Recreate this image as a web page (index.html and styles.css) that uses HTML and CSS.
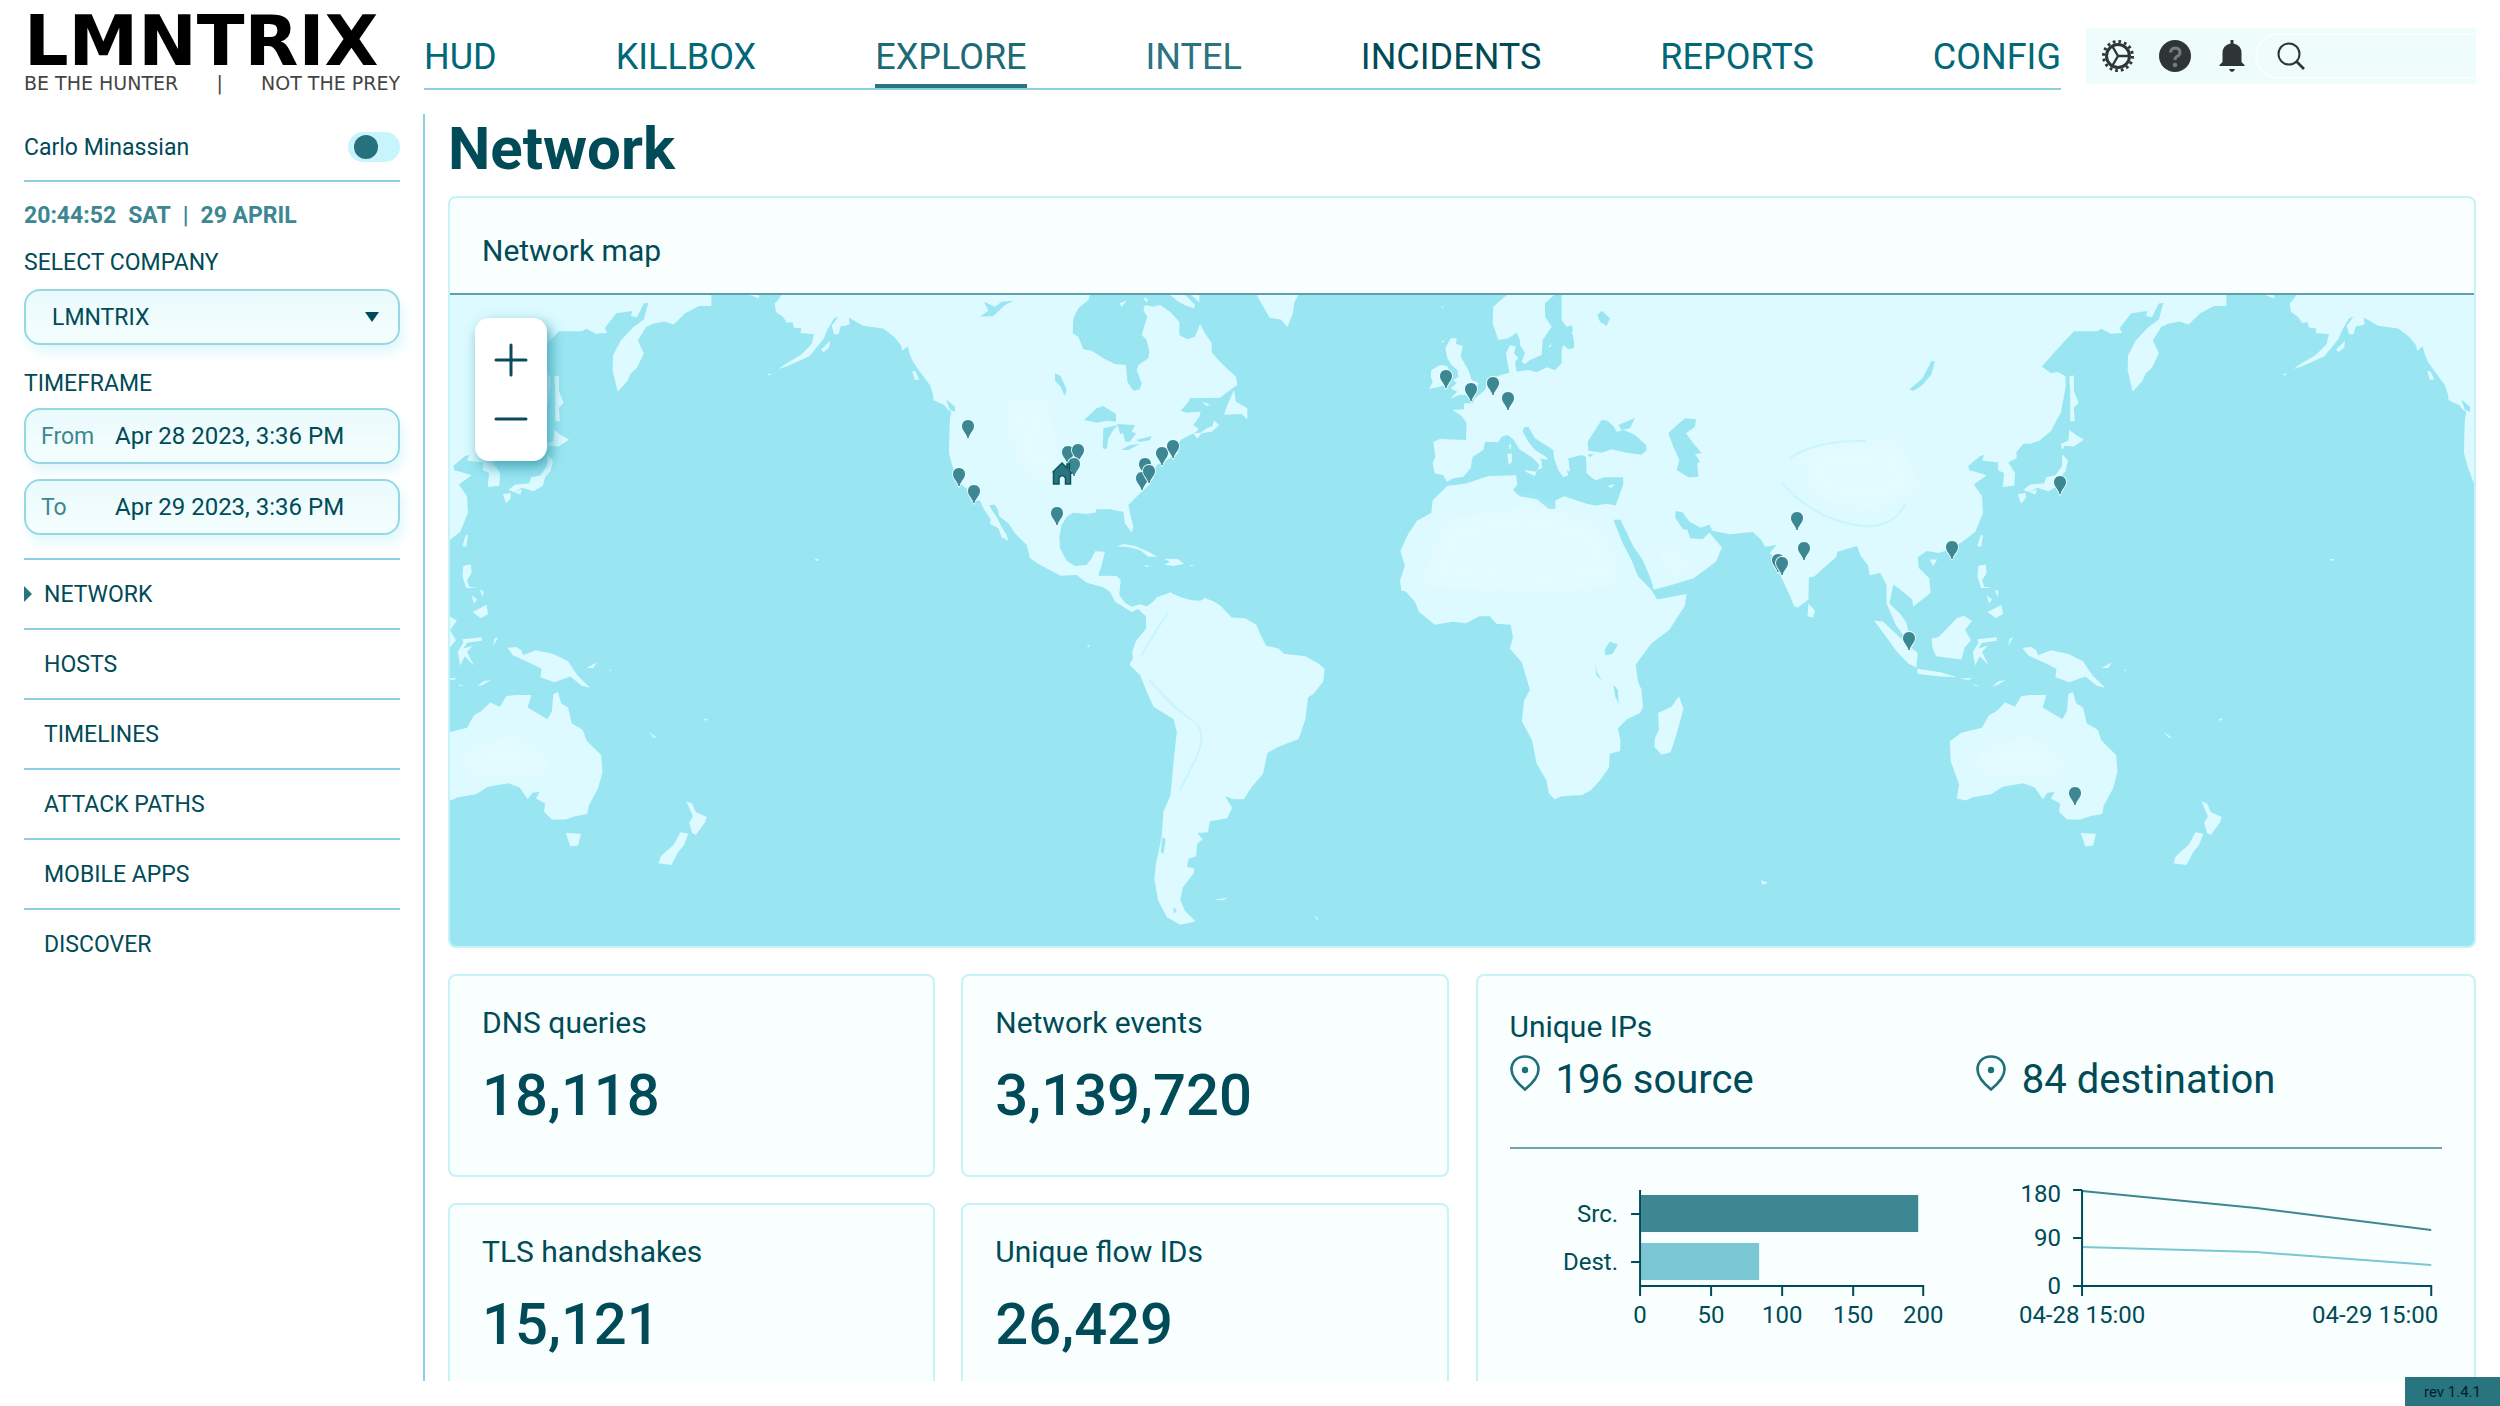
FILE: index.html
```html
<!DOCTYPE html>
<html lang="en">
<head>
<meta charset="utf-8">
<title>LMNTRIX – Network</title>
<link rel="stylesheet" href="styles.css">
</head>
<body>
<header class="topbar">
  <a class="logo" href="#">
    <span class="logo-name">LMNTRIX</span>
    <span class="logo-tag"><span>BE THE HUNTER</span><span>|</span><span>NOT THE PREY</span></span>
  </a>
  <nav class="nav">
    <a href="#">HUD</a>
    <a href="#">KILLBOX</a>
    <a href="#" class="active">EXPLORE</a>
    <a href="#" class="soft">INTEL</a>
    <a href="#" class="strong">INCIDENTS</a>
    <a href="#">REPORTS</a>
    <a href="#">CONFIG</a>
  </nav>
  <div class="tools">
    <button type="button" aria-label="Settings">
      <svg viewBox="0 0 32 32" width="32" height="32" fill="none" stroke="#2f3436">
        <circle cx="16" cy="16" r="14.5" stroke-width="3" stroke-dasharray="2.7 2.993"/>
        <circle cx="16" cy="16" r="11.5" stroke-width="3"/>
        <path d="M16 16H27M16 16L10.500 6.500M16 16L10.500 25.500" stroke-width="2.400"/>
      </svg>
    </button>
    <button type="button" aria-label="Help">
      <svg viewBox="0 0 32 32" width="32" height="32">
        <circle cx="16" cy="16" r="16" fill="#2f3436"/>
        <path d="M11.500 12.500Q12 8 16.500 8Q21 8.500 21 12.500Q21 15 18 16.500Q16 17.500 16 20" fill="none" stroke="#777b7d" stroke-width="3"/>
        <circle cx="16" cy="25" r="2.300" fill="#777b7d"/>
      </svg>
    </button>
    <button type="button" aria-label="Notifications">
      <svg viewBox="0 0 32 32" width="32" height="32" fill="#2f3436">
        <path d="M14.500 0h3v3.500q8 2 8 9.500v9l3 3v1h-25v-1l3-3v-9q0-7.500 8-9.500zM13 29h6q-1 3-3 3t-3-3z"/>
      </svg>
    </button>
    <label class="search">
      <svg viewBox="0 0 28 28" width="28" height="28" fill="none" stroke="#2f3436">
        <circle cx="12" cy="12" r="10.500" stroke-width="2"/>
        <path d="M19.500 19.500L27 27" stroke-width="2.600"/>
      </svg>
      <input type="search" aria-label="Search">
    </label>
  </div>
</header>

<div class="body">
  <aside class="sidebar">
    <div class="user">
      <label for="theme">Carlo Minassian</label>
      <input type="checkbox" id="theme" class="toggle">
    </div>
    <div class="clock"><span>20:44:52</span> <span>SAT</span> <span>|</span> <span>29 APRIL</span></div>
    <label class="field-name" for="company">SELECT COMPANY</label>
    <div class="select-box">
      <select id="company"><option>LMNTRIX</option></select>
      <svg viewBox="0 0 14 10" width="14" height="10"><path d="M0 0H14L7 10Z" fill="#004b57"/></svg>
    </div>
    <div class="field-name timeframe">TIMEFRAME</div>
    <label class="date-box"><span>From</span><input type="text" value="Apr 28 2023, 3:36 PM"></label>
    <label class="date-box"><span>To</span><input type="text" value="Apr 29 2023, 3:36 PM"></label>
    <ul class="menu">
      <li class="current"><a href="#">NETWORK</a></li>
      <li><a href="#">HOSTS</a></li>
      <li><a href="#">TIMELINES</a></li>
      <li><a href="#">ATTACK PATHS</a></li>
      <li><a href="#">MOBILE APPS</a></li>
      <li><a href="#">DISCOVER</a></li>
    </ul>
  </aside>

  <main class="main">
    <h1>Network</h1>
    <section class="card map-card">
      <h2>Network map</h2>
      <div class="map">
        <svg class="map-svg" viewBox="450 295 2024 651" role="img" aria-label="World map of network endpoints">
          <defs>
            <filter id="soft" x="-20%" y="-20%" width="140%" height="140%"><feGaussianBlur stdDeviation="7"/></filter>
            <g id="pin">
              <path d="M0-7C4-7 6-4 6-1C6 3 3 5 0 11C-3 5-6 3-6-1C-6-4-4-7 0-7Z" fill="#3d8792" stroke="#e9fdff" stroke-width="2" paint-order="stroke"/>
              <circle cx="0" cy="10" r="1" fill="#3d8792"/>
            </g>
            <g id="world">
              <g fill="#dcfaff">
                <!-- Alaska and the Canadian west coast -->
                <g transform="translate(430 90) scale(.44643 .55485)">
                  <path d="M790 366L780 378 772 385 775 400 790 408 800 420 812 418 815 428 832 430 830 438 860 440 855 458 830 478 800 492 780 503 800 498 850 480 868 462 882 448 890 432 905 412 915 408 900 425 905 440 915 440 920 426 930 425 940 422 938 410 970 425 1015 430 1040 445 1055 460 1058 470 1070 462 1074 475 1082 490 1095 505 1107 518 1120 532 1128 552 1145 562 1160 575 1180 590V366Z"/>
                  <path d="M712 368L738 376 736 368ZM876 468L896 452 894 464 882 472ZM757 512L766 511 760 515ZM1080 506L1088 508 1096 522 1086 522ZM862 846L872 845 868 849ZM1472 1000L1478 1002 1474 1005Z"/>
                </g>
                <!-- North and Central America -->
                <g transform="translate(940 290) scale(.33333)">
                  <path d="M-20 12L-20 330 0 340 15 345 22 358 35 364 30 385 28 430 27 490 38 530 55 575 85 600 100 630 120 632 130 655 152 688 150 702 175 715 185 742 205 752 200 735 185 712 170 680 155 660 148 645 165 644 175 662 177 678 205 700 225 730 260 765 270 805 300 825 340 845 362 857 410 855 440 878 490 892 510 905 525 935 550 950 575 967 590 955 608 960 620 985 618 1060 700 1060 720 920 690 908 650 922 640 937 625 950 600 943 575 950 555 938 538 915 542 870 530 858 475 857 485 825 495 785 465 784 455 805 440 825 405 828 380 812 360 775 358 740 365 705 380 680 400 668 440 672 465 668 470 658 510 657 530 662 550 665 555 700 575 728 580 710 570 670 565 645 600 610 630 582 640 550 650 525 680 510 715 490 712 465 725 448 770 425 775 416 760 405 778 380 782 365 740 368 722 362 745 335 750 325 840 323 870 300 892 285 888 260 865 240 830 205 815 185 815 160 795 130 780 102 765 140 742 148 718 135 718 95 690 65 660 45 640 50 615 45 610 60 622 80 605 135 620 150 628 185 625 205 595 225 590 240 605 280 600 298 580 302 562 275 558 225 525 222 490 205 455 182 430 178 415 140 398 130 400 85 415 55 445 30 450 12Z"/>
                  <path d="M882 300L888 335 905 345 922 355V388L905 372 852 374 862 345ZM760 430L782 428 800 415 818 408 822 392 838 405 815 425 785 430 772 446ZM785 334L810 345 800 348ZM690 14L735 14 765 45 762 55 740 48 715 35ZM750 12H778V38L765 25ZM610 22L625 28 618 38ZM538 40L560 32 545 50Z"/>
                  <path d="M532 770L550 762 585 768 625 785 652 800 625 800 600 780 560 770ZM672 806L715 808 732 822 700 828 672 824 690 816ZM612 826L632 828 618 831ZM750 824L764 827 752 829Z"/>
                </g>
                <!-- Greenland, South America, Africa, Middle East -->
                <g transform="translate(1100 290) scale(.44643 .42092)">
                  <path d="M350 10L380 66 405 70 420 88 432 55 435 30 445 10Z"/>
                  <path d="M70 765L85 758 103 775 103 805 80 835 72 860 74 875 66 890 90 915 105 955 120 990 165 1020 172 1050 165 1120 158 1200 142 1240 138 1300 125 1365 122 1400 130 1450 150 1490 180 1508 214 1500 190 1475 180 1450 185 1420 210 1385 212 1375 195 1370 198 1352 215 1345 218 1315 230 1305 218 1290 242 1288 246 1262 285 1255 296 1230 280 1203 300 1210 322 1210 340 1180 365 1150 375 1100 400 1085 445 1067 460 1020 466 968 478 960 500 930 503 900 490 888 460 870 412 864 400 852 372 845 360 820 350 795 325 780 295 778 270 750 255 740 235 732 225 738 205 737 165 725 158 718 125 735 105 752 75 750Z"/>
                  <path d="M256 1448L286 1444 275 1450ZM480 1485L490 1495 486 1496ZM1480 1402L1496 1408 1484 1413Z"/>
                  <path d="M778 465L745 500 742 530 710 548 690 580 673 620 683 655 672 690 675 714 685 716 705 740 715 765 750 795 790 788 820 792 850 775 873 775 888 793 920 795 925 825 918 852 945 885 963 950 950 975 945 1025 968 1070 978 1125 1000 1165 1005 1195 1018 1210 1035 1203 1080 1200 1100 1188 1120 1165 1140 1135 1142 1102 1165 1095 1166 1070 1160 1042 1180 1020 1210 1005 1216 990 1213 950 1205 930 1200 890 1235 840 1275 808 1310 750 1314 722 1248 735 1235 712 1205 680 1190 640 1170 600 1150 546 1166 546 1195 610 1215 640 1235 690 1240 712 1270 704 1330 685 1380 645 1393 612 1365 576 1350 592 1322 590 1316 570 1305 568 1288 540 1290 525 1305 528 1320 550 1345 565 1365 558 1372 572 1410 580 1462 575 1480 592 1490 610 1516 606 1500 625 1516 640 1525 680 1545 725 1555 752 1566 754V10H1050L1095 440 1110 452 1130 445 1172 445 1172 462 1155 512 1135 508 1110 512 1090 508 1040 490 1020 500 1020 520 1005 520 980 498 940 490 925 475 935 462 932 440 870 442 820 460 795 463Z"/>
                  <path d="M1297 965L1307 995 1290 1060 1278 1098 1258 1104 1242 1085 1243 1065 1252 1045 1250 1005 1280 990Z"/>
                </g>
                <!-- Europe -->
                <g transform="translate(1420 290) scale(.33333)">
                  <path d="M425 10V90L440 110 490 98 520 94 530 106 500 120 455 125 462 150 462 175 445 178 430 165 425 180V220L405 240 380 232 350 247 325 240 290 245 285 215 295 205 282 190 288 170 270 165 258 190 262 215 268 248 240 256 205 268 195 300 165 325 158 340 132 340 132 358 98 360 125 378 140 400 138 450 60 447 40 455 46 500 38 520 44 550 70 556 80 575 100 565 130 560 152 535 158 500 190 480 195 455 235 457 245 440 262 435 280 448 298 478 340 505 358 525 350 545 315 540 318 546 345 558 350 540 366 535 365 515 360 505 382 510 380 502 345 480 325 455 308 425 312 412 325 410 345 445 400 480 402 505 415 540 430 562 445 555 440 540 450 545 445 505 485 495 498 500 500 550 520 565 545 560 600 560 900 560V10Z"/>
                  <path d="M266 10L220 50 218 100 235 150 265 145 290 128 300 150 300 165 315 190 305 215 315 222 330 210 365 195 368 150 395 110 375 80V40L408 10Z"/>
                  <path d="M92 145H110L108 162 128 168 122 200 145 240 155 270 175 278 168 305 140 315 120 314 90 326 112 305 92 295 110 280 100 270 115 260 112 240 95 225 82 205 76 175ZM34 240L60 225 82 228 88 250 80 285 28 297 38 275 32 260ZM262 492L275 490 276 515 266 526ZM266 466L274 462 272 482ZM562 588L584 582 574 594ZM385 172L395 160 392 170ZM62 50H72L68 54ZM64 155L72 150 70 158Z"/>
                </g>
                <!-- Asia and Oceania -->
                <g transform="translate(1780 290) scale(.45918 .42092)">
                  <path d="M-5 10H972V38L945 38 915 55 890 82 870 75 845 80 830 88 812 120 825 150 810 185 795 200 790 215 768 242 757 190 758 155 775 120 800 90 825 70 835 30 825 32 810 65 797 62 800 50 765 55 740 90 745 102 720 104 700 92 690 98 640 98 600 145 570 182 590 198 605 195 622 205 622 230 612 290 590 335 565 358 545 365 530 365 515 385 515 400 497 410 512 435 510 465 485 468 488 435 475 428 475 410 440 405 445 392 435 395 410 418 412 428 425 432 450 440 422 462 440 490 442 530 425 575 395 600 365 618 345 625 320 620 300 635 302 660 325 685 328 720 290 752 288 735 260 710 247 700 238 745 262 770 275 790 283 830 275 830 252 795 232 745 232 700 218 672 195 678 192 655 175 630 168 608 125 622 122 635 75 680 63 683 62 735 38 755 5 675 -5 650Z"/>
                  <path d="M62 745L76 762 72 778 60 775ZM205 785L225 788 265 830 285 850 300 862 297 897 280 888 255 860 230 822ZM298 900L350 908 385 920 350 918 300 912ZM392 923L418 922 410 927ZM422 937L434 940 424 941ZM462 942L475 930 492 926 475 938ZM330 828L345 825 385 780 400 774 418 786 403 808 416 832 402 850 395 878 340 870 332 850ZM420 860L432 838 430 830 472 825 472 833 440 838 432 852 452 845 440 860 455 892 435 870 425 892ZM497 845L500 828 508 825ZM528 850L548 848 558 856 562 868 590 856 628 865 660 882 680 915 708 945 690 940 665 918 630 932 600 920 602 900 575 885 540 868ZM700 898L722 885 715 898ZM748 902L754 903 752 906Z"/>
                  <path d="M370 1072L395 1052 440 1040 455 1010 472 1000 490 980 512 990 525 965 545 962 580 962 572 992 615 1020 625 1000 628 960 638 955 645 982 660 992 668 1030 692 1045 700 1070 732 1105 735 1145 725 1185 705 1225 702 1245 675 1250 655 1258 625 1258 608 1240 610 1220 590 1208 598 1192 582 1195 572 1210 555 1182 530 1172 485 1180 460 1198 420 1205 405 1213 385 1208 390 1175 372 1120ZM655 1290L688 1292 682 1320 665 1322ZM918 1215L930 1220 938 1240 962 1252 958 1265 938 1295 930 1290 924 1265 932 1250ZM905 1288L922 1292 912 1320 900 1335 885 1366 857 1362 862 1345 890 1318ZM836 1050L855 1065 845 1062ZM955 1020L964 1018 960 1024ZM1198 639L1205 640 1200 643Z"/>
                  <path d="M630 332L645 345 662 355 640 372 620 370 614 380 612 365 628 358ZM615 390L627 405 622 430 610 445 605 465 585 478 560 470 542 480 530 475 545 462 575 460 580 445 600 440 614 418ZM518 485L535 482 535 495 525 507ZM542 480L560 474 556 486ZM630 205L640 203 640 240 650 268 640 280 642 312 632 312 632 240ZM437 583L442 582 438 610 430 608ZM326 640L342 640 334 656ZM432 655L448 652 450 672 440 690 445 705 462 708 438 708 430 680ZM450 725L462 735 455 745ZM468 712L476 715 474 730ZM452 765L470 755 482 748 486 770 470 780Z"/>
                </g>
              </g>
              <!-- lighter deserts and plateaus -->
              <g fill="#edfcff" opacity=".45" filter="url(#soft)">
                <path d="M1445 520L1530 505 1600 525 1625 585 1550 592 1420 587Z"/>
                <path d="M1650 540L1690 560 1685 575 1665 570Z"/>
                <path d="M1800 450L1900 440 1920 490 1870 512 1810 495Z"/>
                <path d="M1975 752L2030 735 2070 765 2060 775 1980 775Z"/>
                <path d="M1000 400L1050 400 1060 490 1020 470Z"/>
              </g>
              <g fill="none" stroke="#bff3fa" stroke-width="2" opacity=".7" stroke-linecap="round">
                <path d="M1782 483Q1810 515 1850 524T1905 505M1790 458Q1815 440 1865 441"/>
                <path d="M1168 612Q1150 640 1142 655M1150 680Q1175 710 1192 720T1195 760L1180 790"/>
              </g>
              <!-- inland seas and lakes -->
              <g fill="#99e6f2">
                <g transform="translate(940 290) scale(.33333)">
                  <path d="M132 35L165 50 185 35 222 32 195 45 160 78 120 80 145 62ZM345 250L362 258 380 300 374 318 362 290 345 272ZM432 390L470 355 490 348 528 372V395L500 392 470 398ZM490 415L535 405 520 420 505 445 500 478 488 475ZM532 402L585 405 575 425 588 430 570 455 555 455 550 430 540 432ZM542 480L570 465 600 462 565 480ZM588 450L635 438 630 450 600 456ZM18 328L45 350 45 365 30 360Z"/>
                </g>
                <g transform="translate(1420 290) scale(.33333)">
                  <path d="M503 455L525 420 545 390 562 392 580 408 590 425 612 420 645 435 678 465 680 480 665 494 620 488 575 478 545 488 505 482ZM595 405L645 384 630 415 605 420ZM502 493L522 492 510 502ZM745 430L765 410 795 385 828 388 825 410 798 430 820 460 845 490 825 492 840 515 832 520 835 560 805 562 770 540 778 510 760 470ZM532 75L545 62 570 85 560 108 540 95Z"/>
                </g>
                <g transform="translate(1100 290) scale(.44643 .42092)">
                  <path d="M1130 855L1142 835 1160 842 1148 865 1132 868ZM1107 878L1112 905 1124 928 1112 915ZM1150 938L1160 950 1162 984 1154 965ZM140 1300L147 1305 142 1340 136 1335ZM165 1465L172 1475 165 1482Z"/>
                </g>
                <g transform="translate(1780 290) scale(.45918 .42092)">
                  <path d="M330 168L337 170 330 200 308 228 290 240 282 236 310 210Z"/>
                </g>
              </g>
            </g>
          </defs>
          <rect x="440" y="284" width="2050" height="680" fill="#99e6f2"/>
          <use href="#world" x="-1515"/>
          <use href="#world"/>
          <use href="#world" x="1515"/>
          <use href="#pin" x="968" y="427"/><use href="#pin" x="959" y="475"/><use href="#pin" x="974" y="492"/>
          <use href="#pin" x="1068" y="453"/><use href="#pin" x="1078" y="451"/><use href="#pin" x="1074" y="465"/>
          <use href="#pin" x="1057" y="514"/><use href="#pin" x="1145" y="465"/><use href="#pin" x="1142" y="479"/>
          <use href="#pin" x="1149" y="472"/><use href="#pin" x="1162" y="454"/><use href="#pin" x="1173" y="447"/>
          <use href="#pin" x="1446" y="377"/><use href="#pin" x="1471" y="390"/><use href="#pin" x="1493" y="384"/>
          <use href="#pin" x="1508" y="399"/><use href="#pin" x="1797" y="519"/><use href="#pin" x="1804" y="549"/>
          <use href="#pin" x="1778" y="561"/><use href="#pin" x="1782" y="564"/><use href="#pin" x="1952" y="548"/>
          <use href="#pin" x="1909" y="639"/><use href="#pin" x="2060" y="483"/><use href="#pin" x="2075" y="794"/>
          <!-- home site -->
          <path d="M1053 472L1062 463 1067 468V464H1069.500V470.500L1071.500 473H1070.500V484H1065.500V478Q1062 473 1059 478V484H1053.500V473Z" fill="#2a7480" stroke="#0d5560" stroke-width="1.500"/>
        </svg>
        <div class="zoom">
          <button type="button" aria-label="Zoom in"><svg viewBox="0 0 32 32" width="32" height="32"><path d="M1 16H31M16 1V31" stroke="#0b4a5c" stroke-width="3" stroke-linecap="round"/></svg></button>
          <button type="button" aria-label="Zoom out"><svg viewBox="0 0 32 32" width="32" height="32"><path d="M1 16H31" stroke="#0b4a5c" stroke-width="3" stroke-linecap="round"/></svg></button>
        </div>
      </div>
    </section>

    <div class="panels">
      <div class="stats">
        <section class="card stat"><h2>DNS queries</h2><p>18,118</p></section>
        <section class="card stat"><h2>Network events</h2><p>3,139,720</p></section>
        <section class="card stat"><h2>TLS handshakes</h2><p>15,121</p></section>
        <section class="card stat"><h2>Unique flow IDs</h2><p>26,429</p></section>
      </div>
      <section class="card ips">
        <h2>Unique IPs</h2>
        <div class="ip-row">
          <p><svg viewBox="0 0 30 36" width="30" height="36"><path d="M15 1.500C23 1.500 28.500 7 28.500 14.500C28.500 22 23 28 15 34.500C7 28 1.500 22 1.500 14.500C1.500 7 7 1.500 15 1.500Z" fill="none" stroke="#1f6f7b" stroke-width="2.600"/><circle cx="15" cy="15" r="3.200" fill="#1f6f7b"/></svg>196 source</p>
          <p><svg viewBox="0 0 30 36" width="30" height="36"><path d="M15 1.500C23 1.500 28.500 7 28.500 14.500C28.500 22 23 28 15 34.500C7 28 1.500 22 1.500 14.500C1.500 7 7 1.500 15 1.500Z" fill="none" stroke="#1f6f7b" stroke-width="2.600"/><circle cx="15" cy="15" r="3.200" fill="#1f6f7b"/></svg>84 destination</p>
        </div>
        <div class="charts">
          <svg viewBox="0 0 466 150" role="img" aria-label="Source and destination totals">
            <rect x="131" y="14" width="277" height="37" fill="#3d8792"/>
            <rect x="131" y="62" width="118" height="37" fill="#7bc6d3"/>
            <path d="M130 9V115M130 105H414M121 33H130M121 81H130M201 105V115M272 105V115M343 105V115M413 105V115" class="axis"/>
            <g text-anchor="end"><text x="108" y="41">Src.</text><text x="108" y="89">Dest.</text></g>
            <g text-anchor="middle"><text x="130" y="142">0</text><text x="201" y="142">50</text><text x="272" y="142">100</text><text x="343" y="142">150</text><text x="413" y="142">200</text></g>
          </svg>
          <svg viewBox="0 0 466 150" role="img" aria-label="Unique IPs over time">
            <path d="M106 10L280 27 455 49" fill="none" stroke="#3d8792" stroke-width="2"/>
            <path d="M106 66L280 71 455 84" fill="none" stroke="#7bc6d3" stroke-width="2"/>
            <path d="M106 9V115M97 9H106M97 57H106M97 105H455V115" class="axis"/>
            <g text-anchor="end"><text x="85" y="21">180</text><text x="85" y="65">90</text><text x="85" y="113">0</text><text x="462" y="142">04-29 15:00</text></g>
            <text x="106" y="142" text-anchor="middle">04-28 15:00</text>
          </svg>
        </div>
      </section>
    </div>
  </main>
</div>
<div class="rev">rev 1.4.1</div>
</body>
</html>
```
FILE: styles.css
```css
* { box-sizing: border-box; }

body {
  margin: 0;
  height: 100vh;
  padding-bottom: 25px;
  display: flex;
  flex-direction: column;
  overflow: hidden;
  background: #fff;
  color: #004b57;
  font-family: Roboto, "Liberation Sans", sans-serif;
  font-size: 24px;
}

a { color: inherit; text-decoration: none; }
h1, h2, p, ul { margin: 0; padding: 0; }
ul { list-style: none; }
button { border: 0; padding: 0; background: none; display: flex; }
input, select { font: inherit; color: inherit; border: 0; padding: 0; margin: 0; background: none; outline: 0; min-width: 0; }
svg { display: block; flex: none; overflow: visible; }

/* top bar */
.topbar { display: flex; align-items: flex-start; padding: 8px 24px 0; height: 114px; flex: none; }
.logo { width: 376px; margin-right: 24px; color: #000; display: flex; flex-direction: column; flex: none; }
.logo-name { font: bold 70px/66px "DejaVu Sans", sans-serif; }
.logo-tag { display: flex; justify-content: space-between; font: 19px/19px "DejaVu Sans", sans-serif; color: #444; white-space: nowrap; }

.nav { flex: 1; display: flex; justify-content: space-between; margin-top: 20px; border-bottom: 2px solid #8bcfe0; font-size: 36px; color: #006878; }
.nav a { padding-top: 3px; line-height: 53px; border-bottom: 4px solid transparent; }
.nav .active { border-color: #2a7480; color: #1c6a76; }
.nav .soft { color: #2a7480; }
.nav .strong { color: #004b57; }

.tools { width: 390px; height: 56px; margin: 20px 0 0 25px; padding: 0 14px 0 16px; display: flex; align-items: center; gap: 25px; background: #effcfc; flex: none; }
.tools button:nth-child(3) { margin-right: -18px; }
.search { flex: 1; height: 46px; border: 2px solid #fafefe; border-radius: 23px; display: flex; align-items: center; padding-left: 20px; }
.search input { flex: 1; }

/* layout */
.body { flex: 1; display: flex; min-height: 0; }
.sidebar { width: 423px; padding: 0 23px 0 24px; flex: none; }
.main { flex: 1; min-width: 0; overflow: hidden; border-left: 2px solid #8bcfe0; padding: 0 24px 0 23px; }

/* sidebar */
.user { display: flex; justify-content: space-between; align-items: center; height: 68px; border-bottom: 2px solid #8bcfe0; font-size: 23px; }
.toggle { appearance: none; width: 52px; height: 30px; border-radius: 15px; background: #c8f5fd; display: flex; align-items: center; padding-left: 6px; }
.toggle::before { content: ""; width: 24px; height: 24px; border-radius: 50%; background: #25717d; }
.clock { font-weight: 700; font-size: 23px; line-height: 32px; margin-top: 18px; color: #3d8792; white-space: pre; display: flex; gap: 12px; }
.field-name { display: block; font-size: 23px; line-height: 32px; margin-top: 15px; }
.select-box, .date-box { display: flex; align-items: center; height: 56px; border: 2px solid #93d9e4; border-radius: 16px; background: linear-gradient(#eafafc, #f5feff); box-shadow: 4px 8px 12px #e2f8fc; }
.select-box { margin-top: 10px; padding: 0 19px 0 26px; }
.select-box select { appearance: none; flex: 1; font-size: 23px; }
.timeframe { margin-top: 23px; }
.date-box { margin-top: 8px; padding: 0 15px; }
.date-box + .date-box { margin-top: 15px; }
.date-box span { width: 74px; color: #3d8792; font-size: 23px; }
.date-box input { flex: 1; }
.menu { margin-top: 23px; font-size: 23px; }
.menu li { border-top: 2px solid #8bcfe0; height: 70px; display: flex; align-items: center; padding-left: 20px; }
.menu .current { padding-left: 0; gap: 12px; }
.menu .current::before { content: ""; border: 8px solid transparent; border-left-color: #2a7480; border-right: 0; }

/* cards */
h1 { font-size: 60px; line-height: 70px; margin-bottom: 12px; }
h2 { font-size: 30px; line-height: 36px; font-weight: 400; }
.card { border: 2px solid #c6f2f8; border-radius: 8px; background: #f8fffe; }
.map-card { overflow: hidden; }
.map-card h2 { padding: 35px 32px 24px; border-bottom: 2px solid #5fa0ac; }
.map { position: relative; }
.map-svg { width: 100%; height: auto; overflow: hidden; }
.zoom { position: absolute; left: 25px; top: 23px; width: 72px; height: 143px; border-radius: 14px; background: #fff; box-shadow: 4px 6px 14px #4aa5b5; display: flex; flex-direction: column; align-items: center; justify-content: space-evenly; }

.panels { display: grid; grid-template-columns: 1fr 1fr; gap: 27px; margin-top: 26px; }
.stats { display: grid; grid-template-columns: 1fr 1fr; gap: 26px; }
.stat { padding: 29px 32px 0; height: 203px; }
.stat p { font-size: 58px; line-height: 70px; margin-top: 19px; font-weight: 500; }
.ips { padding: 33px 32px 0; }
.ip-row { display: grid; grid-template-columns: 1fr 1fr; height: 92px; margin-top: 10px; }
.ip-row p { display: flex; gap: 16px; font-size: 40px; line-height: 50px; height: 50px; }
.ip-row + .charts { border-top: 2px solid #6fa5ae; padding-top: 32px; }
.charts { display: grid; grid-template-columns: 1fr 1fr; }
.charts svg { width: 100%; height: auto; }
.charts text { font-size: 24px; fill: #004b57; }
.axis { fill: none; stroke: #004b57; stroke-width: 2; }

.rev { position: fixed; right: 0; bottom: 0; width: 95px; height: 29px; background: #28747f; color: #02222b; font-size: 15px; line-height: 30px; text-align: center; }
```
